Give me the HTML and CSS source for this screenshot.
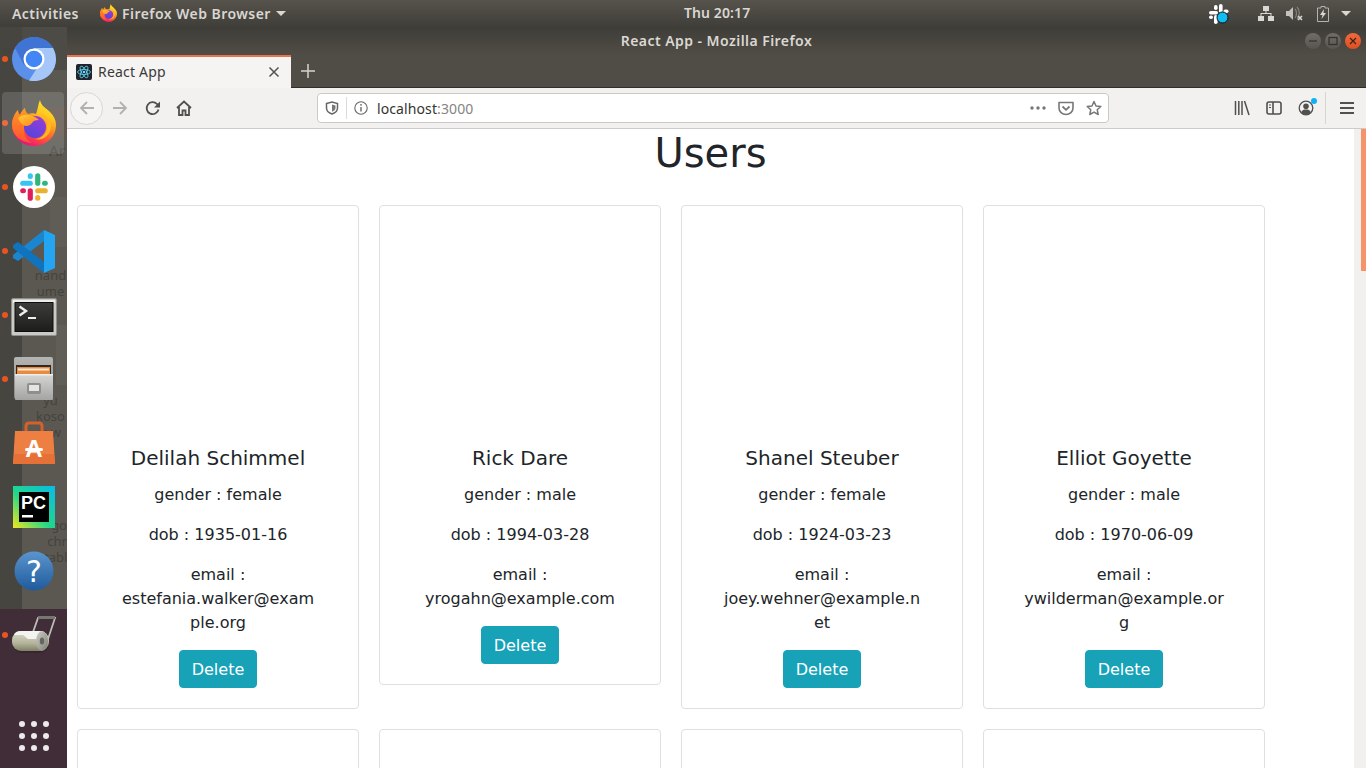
FILE: index.html
```html
<!DOCTYPE html>
<html lang="en">
<head>
<meta charset="utf-8">
<title>React App</title>
<link rel="stylesheet" href="styles.css">
</head>
<body>
<svg class="defs" width="0" height="0" aria-hidden="true">
  <defs>
    <linearGradient id="ffBody" x1="0.8" y1="0.05" x2="0.35" y2="1">
      <stop offset="0" stop-color="#ffe62a"/><stop offset="0.28" stop-color="#ffc420"/><stop offset="0.55" stop-color="#ff7a25"/><stop offset="0.8" stop-color="#fb3f4a"/><stop offset="1" stop-color="#e3137f"/>
    </linearGradient>
    <linearGradient id="ffGlobe" x1="0.8" y1="0" x2="0.2" y2="1">
      <stop offset="0" stop-color="#9a3bd8"/><stop offset="1" stop-color="#4f46dc"/>
    </linearGradient>
    <linearGradient id="ffFox" x1="0" y1="0" x2="1" y2="1">
      <stop offset="0" stop-color="#ffd033"/><stop offset="1" stop-color="#ff7f1e"/>
    </linearGradient>
    <linearGradient id="ffLeft" x1="0" y1="0" x2="0" y2="1">
      <stop offset="0" stop-color="#ff9a24"/><stop offset="1" stop-color="#ff5230"/>
    </linearGradient>
    <symbol id="firefox" viewBox="0 0 44 46">
      <path fill="url(#ffBody)" d="M28 0C29 6 34 8 38 12C42 16 44 20 44 25C44 37 34 46 22 46C10 46 0 37 0 25C0 19 3 13 6 10C6 13 7 14 8 15C9 12 11 10 13 8C13 11 14 13 16 14C19 13 22 13 24 14C26 9 26 4 28 0Z"/>
      <path fill="url(#ffLeft)" d="M6 10C6 13 7 14 8 15C9 12 11 10 13 8C13 11 14 13 16 14C19 14 21 15 23 16C17 18 12 24 12 31C12 36 15 40 20 43C9 42 0 35 0 25C0 19 3 13 6 10Z"/>
      <circle cx="23" cy="27" r="11" fill="url(#ffGlobe)"/>
      <path fill="url(#ffFox)" d="M6 18C9 15 13 14 17 15C20 15 24 17 27 20C23 20 21 21 20 23C18 26 14 27 11 25C9 23 7 21 6 18Z"/>
      <path fill="#ffb81f" d="M28 14C33 16 36 22 35 28C34 34 29 39 23 39C29 41 38 37 39 27C40 21 35 15 28 14Z"/>
    </symbol>
    <symbol id="slack" viewBox="0 0 42 42">
      <g transform="translate(21 21) scale(1.15) translate(-21 -21)">
        <rect x="9" y="15.5" width="11" height="4.5" rx="2.25" fill="#36c5f0"/>
        <rect x="15.5" y="9" width="4.5" height="5" rx="2.2" fill="#36c5f0"/>
        <rect x="22" y="9" width="4.5" height="11" rx="2.25" fill="#2eb67d"/>
        <rect x="28" y="15.5" width="5" height="4.5" rx="2.2" fill="#2eb67d"/>
        <rect x="22" y="22" width="11" height="4.5" rx="2.25" fill="#ecb22e"/>
        <rect x="22" y="28" width="4.5" height="5" rx="2.2" fill="#ecb22e"/>
        <rect x="15.5" y="22" width="4.5" height="11" rx="2.25" fill="#e01e5a"/>
        <rect x="9" y="22" width="5" height="4.5" rx="2.2" fill="#e01e5a"/>
      </g>
    </symbol>
  </defs>
</svg>

<header class="panel">
  <span class="panel-activities">Activities</span>
  <span class="panel-app">
    <svg class="panel-ff" viewBox="0 0 44 46"><use href="#firefox"/></svg>
    <span>Firefox Web Browser</span>
    <i class="caret"></i>
  </span>
  <span class="panel-clock">Thu 20:17</span>
  <span class="tray">
    <span class="tray-item tray-slack">
      <svg width="22" height="22" viewBox="0 0 22 22">
        <g fill="#fff"><rect x="1" y="8" width="9" height="3.6" rx="1.8"/><rect x="6" y="2" width="3.6" height="5" rx="1.8"/><rect x="11" y="1" width="3.6" height="9" rx="1.8"/><rect x="15.5" y="6.500" width="5" height="3.6" rx="1.8"/><rect x="1" y="12.500" width="4" height="3.6" rx="1.8"/><rect x="6" y="12" width="3.6" height="9" rx="1.8"/></g>
        <circle cx="14.500" cy="14.500" r="5.500" fill="#12bdf2" stroke="#111" stroke-width="1"/>
      </svg>
    </span>
    <span class="tray-item tray-net">
      <svg width="16" height="16" viewBox="0 0 16 16" fill="#d9d7d3"><rect x="5" y="0" width="6" height="5"/><rect x="0" y="10" width="6" height="5"/><rect x="10" y="10" width="6" height="5"/><path d="M7.500 5h1v2H13.500v3h-1V8h-9v2h-1V7h5z"/></svg>
    </span>
    <span class="tray-item tray-vol">
      <svg width="18" height="16" viewBox="0 0 18 16"><path d="M0 5h3l4-4v13l-4-4H0z" fill="#c4c2be"/><path d="M9 3c2 2 2 6 0 9M11 1c3 3 3 9 0 12" fill="none" stroke="#85837e" stroke-width="1.2"/><path d="M12 10l4 4M16 10l-4 4" stroke="#d9d7d3" stroke-width="1.6"/></svg>
    </span>
    <span class="tray-item tray-bat">
      <svg width="12" height="16" viewBox="0 0 12 16"><path d="M4 .500h4v1.500h3.500V15.500H.5V2H4z" fill="none" stroke="#b5b3ae" stroke-width="1"/><path d="M7 3L3 9h2.500L4.500 13 9 7H6.500z" fill="#d9d7d3"/></svg>
    </span>
    <i class="caret tray-caret"></i>
  </span>
</header>

<div class="desktop">
  <nav class="dock">
    <div class="ghost">
      <span class="ghost-block ghost-d"></span>
      <span class="ghost-block ghost-a"></span>
      <span class="ghost-block ghost-b"></span>
      <span class="ghost-block ghost-c"></span>
      <span class="ghost-text ghost-1">wn</span>
      <span class="ghost-text ghost-2">Ar</span>
      <span class="ghost-text ghost-3">nand<br>ume</span>
      <span class="ghost-text ghost-4">yu<br>koso<br>y-w</span>
      <span class="ghost-text ghost-5">go<br>chr<br>tabl</span>
    </div>
    <div class="dock-item running">
      <svg width="44" height="44" viewBox="0 0 44 44">
        <circle cx="22" cy="22" r="22" fill="#5a90ea"/>
        <path d="M3 11A22 22 0 0 1 41 11H22L12 28Z" fill="#3f73d4"/>
        <path d="M41 11A22 22 0 0 1 17 43.500L27 28 22 11Z" fill="#a6c6f8"/>
        <circle cx="22" cy="22" r="10.500" fill="#fff"/>
        <circle cx="22" cy="22" r="8.300" fill="#4285f4"/>
      </svg>
    </div>
    <div class="dock-item running active">
      <svg width="44" height="46" viewBox="0 0 44 46"><use href="#firefox"/></svg>
    </div>
    <div class="dock-item running">
      <svg width="42" height="42" viewBox="0 0 42 42"><circle cx="21" cy="21" r="21" fill="#fff"/><use href="#slack" width="42" height="42"/></svg>
    </div>
    <div class="dock-item running">
      <svg width="42" height="43" viewBox="0 0 42 43">
        <polygon points="31,0 31,11 5,31 0,28 0,25" fill="#1a86d0"/>
        <polygon points="31,43 31,32 5,12 0,15 0,18" fill="#0f74bd"/>
        <polygon points="31,0 42,5 42,38 31,43" fill="#23a5f1"/>
      </svg>
    </div>
    <div class="dock-item running">
      <svg width="46" height="41" viewBox="0 -3 46 41">
        <defs><linearGradient id="termBg" x1="0" y1="0" x2="0" y2="1"><stop offset="0" stop-color="#3c3c3a"/><stop offset="1" stop-color="#1d1d1c"/></linearGradient></defs>
        <rect x="0.500" y="0.500" width="45" height="37" rx="1.500" fill="#c9c9c5" stroke="#8f8f8c"/>
        <rect x="2" y="2" width="42" height="3" fill="#ecece8"/>
        <rect x="4" y="4.500" width="38" height="29" fill="url(#termBg)" stroke="#0e0e0e"/>
        <path d="M8.500 8.500l6.500 4.500-6.500 4.500" fill="none" stroke="#eee" stroke-width="2.400"/>
        <rect x="17" y="19" width="8" height="2" fill="#eee"/>
      </svg>
    </div>
    <div class="dock-item running">
      <svg width="42" height="44" viewBox="0 0 42 44">
        <defs>
          <linearGradient id="cabBg" x1="0" y1="0" x2="0" y2="1"><stop offset="0" stop-color="#b4b4b2"/><stop offset="1" stop-color="#8a8a88"/></linearGradient>
          <linearGradient id="drawerBg" x1="0" y1="0" x2="0" y2="1"><stop offset="0" stop-color="#d6d6d4"/><stop offset="1" stop-color="#a4a4a2"/></linearGradient>
        </defs>
        <rect x="1" y="0" width="39" height="42" rx="2" fill="url(#cabBg)"/>
        <rect x="3" y="8" width="35" height="14" fill="#2e2a27"/>
        <rect x="4" y="10" width="33" height="9" fill="#e88b3f"/>
        <rect x="5" y="11.500" width="31" height="2" fill="#fbe7cf"/>
        <rect x="2" y="17" width="38" height="26" rx="1" fill="url(#drawerBg)"/>
        <rect x="2" y="17" width="38" height="1.500" fill="#eeeeec"/>
        <rect x="14" y="26" width="14" height="11" rx="2" fill="#8e8e8c"/>
        <rect x="16" y="28" width="10" height="6" fill="#e4e4e2"/>
      </svg>
    </div>
    <div class="dock-item">
      <svg width="42" height="44" viewBox="0 0 42 44">
        <path d="M13 11V5q0-3 3-3h10q3 0 3 3v6" fill="none" stroke="#d4602a" stroke-width="3"/>
        <path d="M2 10h38l2 33H0z" fill="#ee7f42"/>
        <path d="M1 33h40l1 10H0z" fill="#e67136"/>
        <text x="21" y="36" class="bag-letter">A</text>
        <rect x="12" y="27" width="18" height="3" rx="1.500" fill="#fff"/>
      </svg>
    </div>
    <div class="dock-item">
      <svg width="42" height="42" viewBox="0 0 42 42">
        <defs><linearGradient id="pcBg" x1="0" y1="1" x2="1" y2="0"><stop offset="0" stop-color="#f5e61e"/><stop offset="0.45" stop-color="#21d789"/><stop offset="1" stop-color="#09bbe8"/></linearGradient></defs>
        <rect width="42" height="42" fill="url(#pcBg)"/>
        <rect x="6" y="6" width="30" height="30" fill="#000"/>
        <text x="8" y="23" class="pc-letters">PC</text>
        <rect x="9" y="29" width="11" height="2.500" fill="#fff"/>
      </svg>
    </div>
    <div class="dock-item">
      <svg width="40" height="40" viewBox="0 0 40 40">
        <defs><linearGradient id="helpBg" x1="0" y1="0" x2="0" y2="1"><stop offset="0" stop-color="#5a95ce"/><stop offset="1" stop-color="#1f5b9c"/></linearGradient></defs>
        <circle cx="20" cy="20" r="19.500" fill="url(#helpBg)"/>
        <text x="20" y="31" class="help-letter">?</text>
      </svg>
    </div>
    <div class="dock-item running dock-purple">
      <svg width="46" height="40" viewBox="0 0 46 40">
        <defs>
          <linearGradient id="rollBg" x1="0" y1="0" x2="0" y2="1"><stop offset="0" stop-color="#dcdccb"/><stop offset="0.6" stop-color="#b5b59c"/><stop offset="1" stop-color="#7f7f66"/></linearGradient>
          <linearGradient id="capBg" x1="0" y1="0" x2="1" y2="1"><stop offset="0" stop-color="#d0d0c8"/><stop offset="1" stop-color="#7e7e76"/></linearGradient>
        </defs>
        <path d="M21 20L27 3H44L37 24" fill="none" stroke="#bcbcb6" stroke-width="1.800"/>
        <path d="M27 2.500H44" stroke="#777772" stroke-width="3"/>
        <rect x="2" y="19" width="36" height="19" rx="9" fill="#2a1e24" opacity="0.45"/>
        <rect x="1" y="16" width="37" height="20" rx="9" fill="url(#rollBg)"/>
        <path d="M3 20h9l5 4h15v-8H10q-6 0-7 4z" fill="#f3f3ef"/>
        <ellipse cx="31" cy="26" rx="6" ry="10" fill="url(#capBg)"/>
        <ellipse cx="31" cy="26" rx="2.200" ry="3.500" fill="#66665f"/>
      </svg>
    </div>
    <div class="dock-grid">
      <i></i><i></i><i></i><i></i><i></i><i></i><i></i><i></i><i></i>
    </div>
  </nav>

  <div class="window">
    <div class="titlebar">
      <span class="title-text">React App - Mozilla Firefox</span>
      <span class="win-buttons">
        <span class="win-btn"><svg width="16" height="16" viewBox="0 0 16 16"><path d="M4 8h8" stroke="#33312d" stroke-width="1.200"/></svg></span>
        <span class="win-btn"><svg width="16" height="16" viewBox="0 0 16 16"><rect x="4" y="4.500" width="8" height="7" fill="none" stroke="#33312d" stroke-width="1.200"/></svg></span>
        <span class="win-btn win-close"><svg width="16" height="16" viewBox="0 0 16 16"><path d="M5 5l6 6M11 5l-6 6" stroke="#3a2218" stroke-width="1.200"/></svg></span>
      </span>
    </div>

    <div class="tabstrip">
      <div class="tab">
        <svg class="favicon" width="16" height="16" viewBox="0 0 16 16">
          <rect width="16" height="16" rx="2" fill="#20232a"/>
          <g fill="none" stroke="#61dafb" stroke-width="0.800"><ellipse cx="8" cy="8" rx="6.500" ry="2.500"/><ellipse cx="8" cy="8" rx="6.500" ry="2.500" transform="rotate(60 8 8)"/><ellipse cx="8" cy="8" rx="6.500" ry="2.500" transform="rotate(120 8 8)"/></g>
          <circle cx="8" cy="8" r="1.300" fill="#61dafb"/>
        </svg>
        <span class="tab-label">React App</span>
        <svg class="tab-close" width="12" height="12" viewBox="0 0 12 12"><path d="M1.500 1.500l9 9M10.500 1.500l-9 9" stroke="#55534f" stroke-width="1.500"/></svg>
      </div>
      <svg class="tab-new" width="14" height="14" viewBox="0 0 14 14"><path d="M7 0v14M0 7h14" stroke="#d6d4d0" stroke-width="1.500"/></svg>
    </div>

    <div class="toolbar">
      <span class="tool tool-back">
        <svg width="16" height="16" viewBox="0 0 16 16"><path d="M15 8H2M8 2L2 8l6 6" fill="none" stroke="#b2b1ae" stroke-width="1.800"/></svg>
      </span>
      <span class="tool">
        <svg width="16" height="16" viewBox="0 0 16 16"><path d="M1 8h13M8 2l6 6-6 6" fill="none" stroke="#b2b1ae" stroke-width="1.800"/></svg>
      </span>
      <span class="tool">
        <svg width="16" height="16" viewBox="0 0 16 16"><path d="M13.500 9.500A6 6 0 1 1 12 4L14.500 6.500" fill="none" stroke="#505050" stroke-width="1.800"/><path d="M15 1.500V7.500H9z" fill="#505050"/></svg>
      </span>
      <span class="tool tool-home">
        <svg width="16" height="16" viewBox="0 0 16 16"><path d="M1 8l7-6.500L15 8M3 7v8h3.500v-4.500h3V15H13V7" fill="none" stroke="#505050" stroke-width="1.800"/></svg>
      </span>
      <div class="urlbar">
        <svg class="url-shield" width="14" height="14" viewBox="0 0 14 14"><path d="M1.500 2.500L7 1l5.500 1.500V7c0 3-2.500 5-5.500 6C4 12 1.500 10 1.500 7z" fill="none" stroke="#666" stroke-width="1.500"/><path d="M7 3.500l3.500 1V7c0 1.800-1.500 3-3.500 3.800z" fill="#777"/></svg>
        <span class="url-sep"></span>
        <svg class="url-info" width="14" height="14" viewBox="0 0 14 14"><circle cx="7" cy="7" r="6.200" fill="none" stroke="#666" stroke-width="1.100"/><path d="M7 6v4.500" stroke="#666" stroke-width="1.400"/><circle cx="7" cy="3.800" r="0.900" fill="#666"/></svg>
        <span class="url-text">localhost<span class="url-port">:3000</span></span>
        <span class="url-actions">
          <svg width="16" height="4" viewBox="0 0 16 4" fill="#777"><circle cx="2" cy="2" r="1.700"/><circle cx="8" cy="2" r="1.700"/><circle cx="14" cy="2" r="1.700"/></svg>
          <svg width="16" height="16" viewBox="0 0 16 16"><path d="M1 2.500h14V8a7 6.500 0 0 1-14 0z" fill="none" stroke="#777" stroke-width="1.600" stroke-linejoin="round"/><path d="M4.500 6.500L8 9.800l3.500-3.300" fill="none" stroke="#777" stroke-width="1.800"/></svg>
          <svg width="16" height="16" viewBox="0 0 16 16"><path d="M8 1.500l2 4.500 4.800.500-3.600 3.200 1 4.800L8 12.100l-4.200 2.400 1-4.800L1.200 6.500 6 6z" fill="none" stroke="#777" stroke-width="1.500" stroke-linejoin="round"/></svg>
        </span>
      </div>
      <span class="tool-right tool-first">
        <svg width="16" height="16" viewBox="0 0 16 16"><path d="M1.500 1v14M4.800 1v14M8 1v14M10.500 1l4.500 14" stroke="#505050" stroke-width="1.500" fill="none"/></svg>
      </span>
      <span class="tool-right">
        <svg width="16" height="14" viewBox="0 0 16 14"><rect x="1" y="1" width="14" height="12" rx="2" fill="none" stroke="#505050" stroke-width="1.600"/><path d="M7 1v12" stroke="#505050" stroke-width="1.600"/><path d="M3 4h2M3 6.500h2" stroke="#505050" stroke-width="1"/></svg>
      </span>
      <span class="tool-right tool-account">
        <svg width="16" height="16" viewBox="0 0 16 16"><circle cx="8" cy="8" r="6.800" fill="none" stroke="#505050" stroke-width="1.300"/><circle cx="8" cy="6.200" r="2.800" fill="#505050"/><path d="M3 12.500c1-2.500 3-3 5-3s4 .5 5 3A6.500 6.500 0 0 1 3 12.500z" fill="#505050"/></svg>
        <i class="badge-dot"></i>
      </span>
      <span class="tool-sep"></span>
      <span class="tool-right tool-menu">
        <svg width="14" height="12" viewBox="0 0 14 12"><path d="M0 1h14M0 6h14M0 11h14" stroke="#505050" stroke-width="1.800"/></svg>
      </span>
    </div>

    <div class="viewport">
      <main class="page">
        <h1 class="page-title">Users</h1>
        <div class="cards">
          <article class="card">
            <div class="card-image"></div>
            <div class="card-body">
              <h5 class="card-name">Delilah Schimmel</h5>
              <p class="card-line">gender : female</p>
              <p class="card-line">dob : 1935-01-16</p>
              <p class="card-line">email : estefania.walker@example.org</p>
              <button class="btn-delete">Delete</button>
            </div>
          </article>
          <article class="card">
            <div class="card-image"></div>
            <div class="card-body">
              <h5 class="card-name">Rick Dare</h5>
              <p class="card-line">gender : male</p>
              <p class="card-line">dob : 1994-03-28</p>
              <p class="card-line">email : yrogahn@example.com</p>
              <button class="btn-delete">Delete</button>
            </div>
          </article>
          <article class="card">
            <div class="card-image"></div>
            <div class="card-body">
              <h5 class="card-name">Shanel Steuber</h5>
              <p class="card-line">gender : female</p>
              <p class="card-line">dob : 1924-03-23</p>
              <p class="card-line">email : joey.wehner@example.net</p>
              <button class="btn-delete">Delete</button>
            </div>
          </article>
          <article class="card">
            <div class="card-image"></div>
            <div class="card-body">
              <h5 class="card-name">Elliot Goyette</h5>
              <p class="card-line">gender : male</p>
              <p class="card-line">dob : 1970-06-09</p>
              <p class="card-line">email : ywilderman@example.org</p>
              <button class="btn-delete">Delete</button>
            </div>
          </article>
          <article class="card"><div class="card-image"></div></article>
          <article class="card"><div class="card-image"></div></article>
          <article class="card"><div class="card-image"></div></article>
          <article class="card"><div class="card-image"></div></article>
        </div>
      </main>
      <div class="scrollbar"><div class="scroll-thumb"></div></div>
    </div>
  </div>
</div>
</body>
</html>
```

FILE: styles.css
```css
* { box-sizing: border-box; }

html, body {
  margin: 0;
  height: 100%;
  overflow: hidden;
}

body {
  display: flex;
  flex-direction: column;
  height: 768px;
  font-family: "DejaVu Sans", sans-serif;
  color: #212529;
  background: #4a4741;
}

.defs { position: absolute; }

/* top panel */
.panel {
  flex: 0 0 27px;
  display: flex;
  align-items: center;
  position: relative;
  padding-left: 12px;
  background: linear-gradient(#56534c, #403e39);
  font: 600 14px "Noto Sans", sans-serif;
  letter-spacing: 0.45px;
  color: #d9d7d2;
}

.panel-activities { width: 88px; margin-bottom: 1px; }

.panel-app {
  display: flex;
  align-items: center;
  gap: 5px;
  margin-bottom: 1px;
}

.panel-ff { width: 17px; height: 18px; }

.caret {
  display: block;
  width: 0;
  height: 0;
  border-left: 5px solid transparent;
  border-right: 5px solid transparent;
  border-top: 5px solid #d9d7d2;
}

.panel-clock {
  position: absolute;
  left: 684px;
  top: 3px;
  letter-spacing: 0.1px;
}

.tray {
  margin-left: auto;
  display: flex;
  align-items: center;
  height: 27px;
  padding-right: 15px;
}

.tray-item { display: flex; align-items: center; justify-content: center; }
.tray-slack { width: 22px; margin-right: 28px; }
.tray-net { width: 16px; margin-right: 12px; }
.tray-vol { width: 18px; margin-right: 13px; }
.tray-bat { width: 12px; margin-right: 12px; }

/* desktop */
.desktop {
  flex: 1;
  display: flex;
  min-height: 0;
}

.dock {
  flex: 0 0 67px;
  position: relative;
  display: flex;
  flex-direction: column;
  background:
    linear-gradient(#402d38, #402d38) 0 582px / 100% 100% no-repeat,
    linear-gradient(90deg, #474540 22px, #5a5851 22px);
  overflow: hidden;
}

.ghost {
  position: absolute;
  inset: 0;
}

.ghost-text {
  position: absolute;
  left: 36px;
  width: 36px;
  text-align: center;
  font: 14px/16px "Noto Sans", sans-serif;
  color: #45433e;
}

.ghost-1 { left: 0; width: 22px; top: 15px; font-size: 13px; font-weight: 700; }
.ghost-2 { left: 47px; width: 20px; top: 115px; font-size: 15px; }
.ghost-3 { left: 34px; width: 33px; top: 240px; font-size: 13px; }
.ghost-4 { left: 34px; width: 33px; top: 365px; font-size: 13px; }
.ghost-5 { left: 44px; width: 23px; top: 490px; font-size: 13px; text-align: right; }

.ghost-block { position: absolute; }
.ghost-a { left: 50px; top: 80px; width: 17px; height: 30px; background: #62574d; }
.ghost-b { left: 50px; top: 170px; width: 17px; height: 50px; background: #5f5d56; }
.ghost-c { left: 56px; top: 298px; width: 11px; height: 60px; background: #605e57; }
.ghost-d { left: 22px; top: 0; width: 45px; height: 43px; background: #4d4b45; }

.dock-item {
  flex: 0 0 64px;
  position: relative;
  display: flex;
  align-items: center;
  justify-content: center;
}

.dock-item svg { position: relative; }

.running::before {
  content: "";
  position: absolute;
  left: 2px;
  top: 29px;
  width: 6px;
  height: 6px;
  border-radius: 50%;
  background: #e95420;
}

.active::after {
  content: "";
  position: absolute;
  left: 2px;
  top: 1px;
  width: 62px;
  height: 62px;
  border-radius: 4px;
  background: rgba(255, 255, 255, 0.14);
}

.active svg { z-index: 1; }

.dock-grid {
  position: relative;
  margin-top: auto;
  margin-bottom: 17px;
  align-self: center;
  display: grid;
  grid-template-columns: repeat(3, 6px);
  gap: 6px;
}

.dock-grid i {
  width: 6px;
  height: 6px;
  border-radius: 50%;
  background: #eceaea;
}

.bag-letter {
  font: 700 24px "Liberation Sans", sans-serif;
  fill: #fff;
  text-anchor: middle;
}

.pc-letters {
  font: 700 18px "Liberation Sans", sans-serif;
  fill: #fff;
}

.help-letter {
  font: 400 30px "DejaVu Sans", sans-serif;
  fill: #fff;
  text-anchor: middle;
}

/* window */
.window {
  flex: 1;
  min-width: 0;
  display: flex;
  flex-direction: column;
}

.titlebar {
  flex: 0 0 28px;
  position: relative;
  display: flex;
  align-items: center;
  justify-content: center;
  padding-bottom: 2px;
  background: linear-gradient(#3f3d38, #504d46);
  font: 600 14px "Noto Sans", sans-serif;
  letter-spacing: 0.45px;
  color: #dad8d3;
}

.win-buttons {
  position: absolute;
  right: 5px;
  top: 6px;
  display: flex;
  gap: 4px;
}

.win-btn {
  width: 16px;
  height: 16px;
  border-radius: 50%;
  background: linear-gradient(#6f6d66, #57554f);
  display: flex;
}

.win-close { background: linear-gradient(#f06a3c, #df4e20); }

.tabstrip {
  flex: 0 0 33px;
  display: flex;
  align-items: center;
  background: #504d46;
  border-bottom: 1px solid #2f2e2a;
}

.tab {
  width: 224px;
  height: 33px;
  margin-bottom: -1px;
  display: flex;
  align-items: center;
  padding: 0 11px 1px 9px;
  background: #f5f4f2;
  border-top: 2px solid #e9734e;
  font: 14px "Noto Sans", sans-serif;
  letter-spacing: 0.2px;
  color: #3b3a38;
}

.favicon { flex: none; }
.tab-label { margin-left: 6px; margin-bottom: 2px; }
.tab-close { margin-left: auto; }
.tab-new { margin-left: 10px; }

.toolbar {
  flex: 0 0 41px;
  display: flex;
  align-items: center;
  padding-left: 3px;
  background: #f2f1ef;
  border-bottom: 1px solid #cdcbc8;
}

.tool {
  width: 33px;
  height: 33px;
  display: flex;
  align-items: center;
  justify-content: center;
  flex: none;
}

.tool-back {
  border: 1px solid #d8d7d4;
  border-radius: 50%;
  background: #f6f5f4;
}

.tool-home { width: 30px; }

.urlbar {
  flex: 0 0 792px;
  height: 30px;
  margin-left: 118px;
  display: flex;
  align-items: center;
  padding-left: 7px;
  padding-right: 6px;
  background: #fff;
  border: 1px solid #cbcac7;
  border-radius: 4px;
}

.url-sep {
  width: 1px;
  height: 22px;
  margin: 0 7px 0 7px;
  background: #dcdbd9;
}

.url-text {
  margin-left: 9px;
  font: 14px "Noto Sans", sans-serif;
  letter-spacing: 0.1px;
  color: #35342f;
}

.url-port { color: #86857f; }

.url-actions {
  margin-left: auto;
  display: flex;
  align-items: center;
  gap: 12px;
}

.tool-right {
  flex: 0 0 32px;
  height: 32px;
  position: relative;
  display: flex;
  align-items: center;
  justify-content: center;
}

.tool-first { margin-left: 117px; }

.badge-dot {
  position: absolute;
  left: 21px;
  top: 6px;
  width: 6px;
  height: 6px;
  border-radius: 50%;
  background: #0eb1f5;
}

.tool-sep {
  width: 1px;
  height: 32px;
  margin: 0 5px 0 3px;
  background: #d6d5d2;
}

/* page */
.viewport {
  flex: 1;
  min-height: 0;
  display: flex;
  background: #fff;
}

.page {
  flex: 1;
  min-width: 0;
  overflow: hidden;
}

.page-title {
  margin: 0;
  font-size: 40px;
  font-weight: 400;
  line-height: 48px;
  text-align: center;
}

.cards {
  display: flex;
  flex-wrap: wrap;
  align-items: flex-start;
  gap: 20px;
  margin-top: 28px;
  padding: 0 10px;
}

.card {
  width: 282px;
  background: #fff;
  border: 1px solid #dfdfdf;
  border-radius: 4px;
  text-align: center;
}

.card-image { height: 220px; }

.card-body { padding: 20px 40px; }

.card-name {
  margin: 0 0 13px;
  font-size: 20px;
  font-weight: 400;
  line-height: 24px;
}

.card-line {
  margin: 0 0 16px;
  font-size: 16px;
  line-height: 24px;
  overflow-wrap: break-word;
}

.card-line:nth-of-type(3) { margin-bottom: 15px; }

.btn-delete {
  display: block;
  margin: 0 auto;
  height: 38px;
  padding: 0 12px;
  font: 16px "DejaVu Sans", sans-serif;
  color: #fff;
  background: #17a2b8;
  border: 1px solid #17a2b8;
  border-radius: 4px;
}

.scrollbar {
  flex: 0 0 12px;
  background: #f1f0ee;
  display: flex;
  justify-content: flex-end;
}

.scroll-thumb {
  width: 5px;
  height: 142px;
  background: #f5946b;
}
```
